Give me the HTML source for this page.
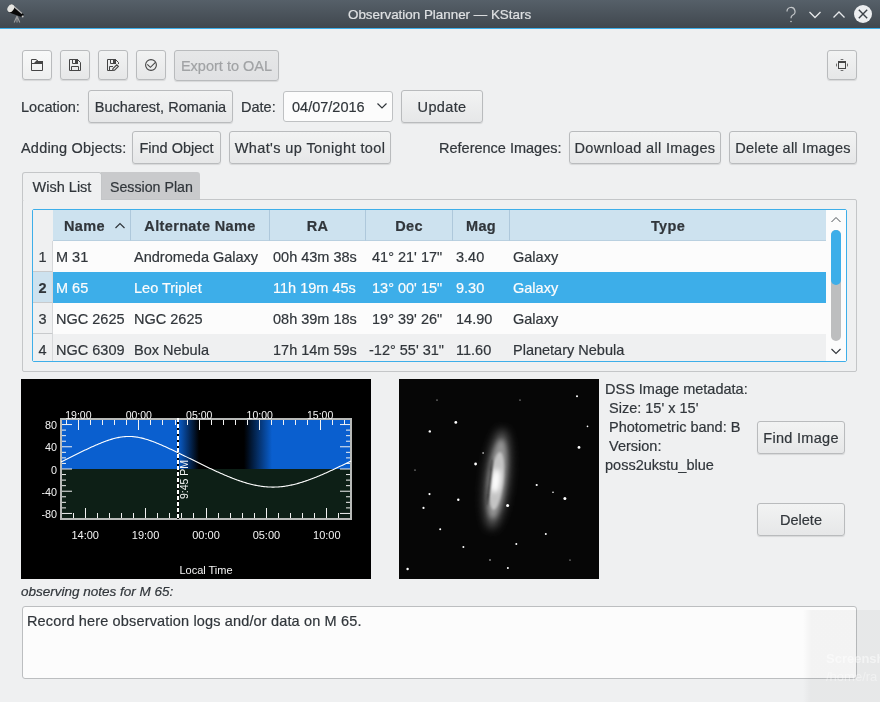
<!DOCTYPE html>
<html><head><meta charset="utf-8">
<style>
*{box-sizing:border-box;margin:0;padding:0}
html,body{width:880px;height:702px;overflow:hidden;background:#eff0f1;will-change:transform;-webkit-text-stroke:0.2px currentColor;font-family:"Liberation Sans",sans-serif;color:#31363b;font-size:14.5px}
.a{position:absolute}
#title{left:0;top:0;width:880px;height:28px;background:linear-gradient(#566069,#40474e)}
#tline{left:0;top:28px;width:880px;height:1px;background:#3daee9}
#ttext{left:348px;top:7px;color:#dfe1e3;font-size:13.4px;white-space:nowrap}
.btn{position:absolute;border:1px solid #b9bbbd;border-radius:3px;background:linear-gradient(#f2f3f3,#e6e7e8);box-shadow:0 1px 1px rgba(0,0,0,.10);text-align:center;white-space:nowrap;line-height:32px}
.lbl{position:absolute;white-space:nowrap;line-height:17px}
.ib svg{position:absolute;left:8px;top:8px}
.hd{position:absolute;top:210px;height:31px;background:#cde2ef;border-right:1px solid #aec8db;border-bottom:1px solid #b9d0e0;font-weight:bold;text-align:center;line-height:32px;font-size:14.5px;letter-spacing:0.35px}
.rn{position:absolute;left:33px;width:20px;background:#eff0f1;border-right:1px solid #d6d8da;border-bottom:1px solid #c8cacc;text-align:center;line-height:33px}
.row{position:absolute;left:53px;width:773px;height:31px}
.c{position:absolute;top:1px;line-height:31px;white-space:nowrap}
</style></head><body>
<div id="title" class="a"></div>
<div id="tline" class="a"></div>
<div id="ttext" class="a">Observation Planner — KStars</div>
<!-- telescope icon -->
<svg class="a" style="left:0;top:0" width="30" height="28" viewBox="0 0 30 28">
<path d="M17 16 L14.2 22.5 M17 16 L17 22.5 M17 16 L19.8 22.5" stroke="#9a9c9e" stroke-width="1.1" fill="none"/>
<path d="M10.5 4 L23.8 14.6 L22.3 17.2 L8.6 12.3 Z" fill="#080808"/>
<path d="M12.5 5.2 L22 13.5" stroke="#b8b8b8" stroke-width="1.2" fill="none"/>
<ellipse cx="10.8" cy="8.3" rx="3" ry="4.1" transform="rotate(35 10.8 8.3)" fill="#e6e6e2"/>
<circle cx="22.6" cy="16.4" r="1" fill="#ccc"/>
</svg>
<!-- window buttons -->
<svg class="a" style="left:780px;top:4px" width="100" height="22" viewBox="0 0 100 22">
<path d="M7 7.5 a4 4 0 1 1 5.5 3.7 c-1.3 .6 -1.5 1.3 -1.5 3" stroke="#c4c7ca" stroke-width="1.2" fill="none"/>
<circle cx="11" cy="17.5" r=".8" fill="#c4c7ca"/>
<path d="M29.5 8 L35 13.5 L40.5 8" stroke="#e6e8ea" stroke-width="1.3" fill="none"/>
<path d="M53.5 13.5 L59 8 L64.5 13.5" stroke="#e6e8ea" stroke-width="1.3" fill="none"/>
<circle cx="83" cy="10" r="9" fill="#eceef0"/>
<path d="M78.8 5.8 L87.2 14.2 M87.2 5.8 L78.8 14.2" stroke="#3c4248" stroke-width="1.4"/>
</svg>

<!-- toolbar -->
<div class="btn ib" style="left:22px;top:50px;width:30px;height:30px;background:linear-gradient(#f8f9f9,#eeefef)">
<svg width="12" height="12" viewBox="0 0 12 12" style="left:8px;top:8px"><path d="M0.5 11.5 V0.5 H5.3 L7.3 2.5 H11.5 V11.5 Z M0.5 4.5 H11.5" stroke="#454545" stroke-width="1" fill="none"/><path d="M5 0 L7 2 H12 V5 H0 V4 H3 L6 1 Z" fill="#454545"/></svg></div>
<div class="btn ib" style="left:60px;top:50px;width:30px;height:30px">
<svg width="12" height="12" viewBox="0 0 12 12" style="left:8px;top:8px"><path d="M0.5 0.5 H8.5 L11.5 3.5 V11.5 H0.5 Z M3.5 0.5 V4.5 H6 M2.5 11.5 V7.5 H9.5 V11.5" stroke="#454545" stroke-width="1" fill="none"/><rect x="6" y="0" width="3" height="5" fill="#454545"/></svg></div>
<div class="btn ib" style="left:98px;top:50px;width:30px;height:30px">
<svg width="12" height="12" viewBox="0 0 12 12" style="left:8px;top:8px"><path d="M5 11.5 H0.5 V0.5 H8.5 L11.5 3.5 V5 M3.5 0.5 V4.5 H6 M2.5 11.5 V7.5 H6" stroke="#454545" stroke-width="1" fill="none"/><rect x="6" y="0" width="3" height="5" fill="#454545"/><path d="M5.6 11.4 L6 9.6 L9.8 5.8 L11.4 7.4 L7.6 11.2 Z" stroke="#454545" stroke-width="1.1" fill="none"/></svg></div>
<div class="btn ib" style="left:136px;top:50px;width:30px;height:30px">
<svg width="12" height="12" viewBox="0 0 12 12" style="left:8px;top:8px"><circle cx="6" cy="6" r="5.4" stroke="#454545" stroke-width="1.1" fill="none"/><path d="M2.3 5.3 L5.4 8.3 L10.4 3.3" stroke="#454545" stroke-width="1.1" fill="none"/></svg></div>
<div class="btn" style="left:174px;top:50px;width:105px;height:31px;line-height:31px;color:#a1a3a5;background:linear-gradient(#e6e7e8,#e0e1e3)">Export to OAL</div>
<div class="btn ib" style="left:827px;top:50px;width:30px;height:30px">
<svg width="12" height="12" viewBox="0 0 12 12" style="left:8px;top:8px"><rect x="2.5" y="2.5" width="7" height="7" stroke="#454545" stroke-width="1" fill="none"/><rect x="2" y="2" width="8" height="2" fill="#454545"/><path d="M4 0.5 Q6 -0.3 8 0.5 Q6 1.4 4 0.5 Z M4 11.5 Q6 10.6 8 11.5 Q6 12.3 4 11.5 Z M0.5 4 Q1.4 6 0.5 8 Q-0.3 6 0.5 4 Z M11.5 4 Q12.3 6 11.5 8 Q10.6 6 11.5 4 Z" fill="#454545"/></svg></div>

<div class="lbl" style="left:21px;top:99px">Location:</div>
<div class="btn" style="left:88px;top:90px;width:145px;height:33px">Bucharest, Romania</div>
<div class="lbl" style="left:241px;top:99px">Date:</div>
<div class="a" style="left:283px;top:91px;width:110px;height:31px;border:1px solid #bfc1c3;border-radius:3px;background:#fcfcfc;line-height:31px;padding-left:8px">04/07/2016</div>
<svg class="a" style="left:376px;top:102px" width="12" height="8" viewBox="0 0 12 8"><path d="M1.5 1.5 L6 6 L10.5 1.5" stroke="#31363b" stroke-width="1.2" fill="none"/></svg>
<div class="btn" style="left:401px;top:90px;width:82px;height:33px;letter-spacing:0.35px">Update</div>

<div class="lbl" style="left:21px;top:140px;letter-spacing:0.2px">Adding Objects:</div>
<div class="btn" style="left:132px;top:131px;width:89px;height:33px">Find Object</div>
<div class="btn" style="left:229px;top:131px;width:162px;height:33px;letter-spacing:0.4px">What's up Tonight tool</div>
<div class="lbl" style="left:439px;top:140px">Reference Images:</div>
<div class="btn" style="left:569px;top:131px;width:152px;height:33px;letter-spacing:0.33px">Download all Images</div>
<div class="btn" style="left:729px;top:131px;width:128px;height:33px;letter-spacing:0.2px">Delete all Images</div>

<!-- tabs -->
<div class="a" style="left:22px;top:199px;width:835px;height:173px;border:1px solid #c4c6c8;border-radius:2px"></div>
<div class="a" style="left:101px;top:172px;width:99px;height:27px;background:#c9cacc;border-radius:0 3px 0 0;line-height:30px;padding-left:9px;font-size:14.2px">Session Plan</div>
<div class="a" style="left:22px;top:172px;width:80px;height:28px;background:#eff0f1;border:1px solid #c4c6c8;border-bottom:none;border-radius:3px 3px 0 0;text-align:center;line-height:29px">Wish List</div>

<!-- table -->
<div class="a" style="left:32px;top:209px;width:815px;height:153px;border:1px solid #3daee9;border-radius:2px;background:#fcfcfc;overflow:hidden"></div>
<div class="a" style="left:33px;top:210px;width:20px;height:31px;background:#eff0f1"></div>
<div class="hd" style="left:53px;width:78px;text-align:left;padding-left:11px">Name</div>
<svg class="a" style="left:114px;top:222px" width="12" height="8" viewBox="0 0 12 8"><path d="M1.5 6 L6 1.5 L10.5 6" stroke="#31363b" stroke-width="1.2" fill="none"/></svg>
<div class="hd" style="left:131px;width:139px">Alternate Name</div>
<div class="hd" style="left:270px;width:96px">RA</div>
<div class="hd" style="left:366px;width:87px">Dec</div>
<div class="hd" style="left:453px;width:57px">Mag</div>
<div class="hd" style="left:510px;width:316px;border-right:none">Type</div>

<div class="row" style="top:241px;background:#fcfcfc"><div class="c" style="left:3px">M 31</div><div class="c" style="left:81px">Andromeda Galaxy</div><div class="c" style="left:220px">00h 43m 38s</div><div class="c" style="left:319px">41° 21' 17"</div><div class="c" style="left:403px">3.40</div><div class="c" style="left:460px">Galaxy</div></div>
<div class="row" style="top:272px;background:#3daee9;color:#fcfcfc"><div class="c" style="left:3px">M 65</div><div class="c" style="left:81px">Leo Triplet</div><div class="c" style="left:220px">11h 19m 45s</div><div class="c" style="left:319px">13° 00' 15"</div><div class="c" style="left:403px">9.30</div><div class="c" style="left:460px">Galaxy</div></div>
<div class="row" style="top:303px;background:#fcfcfc"><div class="c" style="left:3px">NGC 2625</div><div class="c" style="left:81px">NGC 2625</div><div class="c" style="left:220px">08h 39m 18s</div><div class="c" style="left:319px">19° 39' 26"</div><div class="c" style="left:403px">14.90</div><div class="c" style="left:460px">Galaxy</div></div>
<div class="row" style="top:334px;height:27px;background:#eff0f1;overflow:hidden"><div class="c" style="left:3px">NGC 6309</div><div class="c" style="left:81px">Box Nebula</div><div class="c" style="left:220px">17h 14m 59s</div><div class="c" style="left:316px">-12° 55' 31"</div><div class="c" style="left:403px">11.60</div><div class="c" style="left:460px">Planetary Nebula</div></div>
<div class="rn" style="top:241px;height:31px">1</div>
<div class="rn" style="top:272px;height:31px;background:#cde2ef;font-weight:bold">2</div>
<div class="rn" style="top:303px;height:31px">3</div>
<div class="rn" style="top:334px;height:27px;border-bottom:none;overflow:hidden">4</div>
<!-- scrollbar -->
<svg class="a" style="left:826px;top:210px" width="20" height="151" viewBox="0 0 20 151">
<rect width="20" height="151" fill="#fcfcfc"/>
<path d="M5.5 12 L10 7.5 L14.5 12" stroke="#4d5257" stroke-width="1" fill="none"/>
<path d="M5.5 139 L10 143.5 L14.5 139" stroke="#31363b" stroke-width="1.1" fill="none"/>
<rect x="5" y="20" width="10" height="111" rx="5" fill="#bdbebf"/>
<rect x="5" y="20" width="10" height="55" rx="5" fill="#3daee9"/>
</svg>

<!-- plot -->
<svg class="a" style="left:21px;top:379px" width="350" height="200" viewBox="0 0 350 200">
<defs><linearGradient id="gl" x1="0" x2="1"><stop offset="0.000" stop-color="rgb(10,95,207)"/><stop offset="0.125" stop-color="rgb(8,83,181)"/><stop offset="0.250" stop-color="rgb(7,71,155)"/><stop offset="0.375" stop-color="rgb(6,59,129)"/><stop offset="0.500" stop-color="rgb(5,47,103)"/><stop offset="0.625" stop-color="rgb(3,35,77)"/><stop offset="0.750" stop-color="rgb(2,23,51)"/><stop offset="0.875" stop-color="rgb(1,11,25)"/><stop offset="1.000" stop-color="rgb(0,0,0)"/></linearGradient><linearGradient id="gr" x1="0" x2="1"><stop offset="0.000" stop-color="rgb(0,0,0)"/><stop offset="0.125" stop-color="rgb(1,11,25)"/><stop offset="0.250" stop-color="rgb(2,23,51)"/><stop offset="0.375" stop-color="rgb(3,35,77)"/><stop offset="0.500" stop-color="rgb(5,47,103)"/><stop offset="0.625" stop-color="rgb(6,59,129)"/><stop offset="0.750" stop-color="rgb(7,71,155)"/><stop offset="0.875" stop-color="rgb(8,83,181)"/><stop offset="1.000" stop-color="rgb(10,95,207)"/></linearGradient></defs>
<rect x="0" y="0" width="350" height="200" fill="#000"/>
<rect x="40" y="40" width="290" height="50" fill="#0a5fcf"/>
<rect x="157" y="40" width="21" height="50" fill="url(#gl)"/>
<rect x="178" y="40" width="45" height="50" fill="#000"/>
<rect x="223" y="40" width="28" height="50" fill="url(#gr)"/>
<rect x="40" y="90" width="290" height="50" fill="#0d1f16"/>
<line x1="40" y1="134.44" x2="51" y2="134.44" stroke="#f2f2f2" stroke-width="1"/>
<line x1="330" y1="134.44" x2="319" y2="134.44" stroke="#f2f2f2" stroke-width="1"/>
<line x1="40" y1="128.89" x2="45" y2="128.89" stroke="#f2f2f2" stroke-width="1"/>
<line x1="330" y1="128.89" x2="325" y2="128.89" stroke="#f2f2f2" stroke-width="1"/>
<line x1="40" y1="123.33" x2="45" y2="123.33" stroke="#f2f2f2" stroke-width="1"/>
<line x1="330" y1="123.33" x2="325" y2="123.33" stroke="#f2f2f2" stroke-width="1"/>
<line x1="40" y1="117.78" x2="45" y2="117.78" stroke="#f2f2f2" stroke-width="1"/>
<line x1="330" y1="117.78" x2="325" y2="117.78" stroke="#f2f2f2" stroke-width="1"/>
<line x1="40" y1="112.22" x2="51" y2="112.22" stroke="#f2f2f2" stroke-width="1"/>
<line x1="330" y1="112.22" x2="319" y2="112.22" stroke="#f2f2f2" stroke-width="1"/>
<line x1="40" y1="106.67" x2="45" y2="106.67" stroke="#f2f2f2" stroke-width="1"/>
<line x1="330" y1="106.67" x2="325" y2="106.67" stroke="#f2f2f2" stroke-width="1"/>
<line x1="40" y1="101.11" x2="45" y2="101.11" stroke="#f2f2f2" stroke-width="1"/>
<line x1="330" y1="101.11" x2="325" y2="101.11" stroke="#f2f2f2" stroke-width="1"/>
<line x1="40" y1="95.56" x2="45" y2="95.56" stroke="#f2f2f2" stroke-width="1"/>
<line x1="330" y1="95.56" x2="325" y2="95.56" stroke="#f2f2f2" stroke-width="1"/>
<line x1="40" y1="90.00" x2="51" y2="90.00" stroke="#f2f2f2" stroke-width="1"/>
<line x1="330" y1="90.00" x2="319" y2="90.00" stroke="#f2f2f2" stroke-width="1"/>
<line x1="40" y1="84.44" x2="45" y2="84.44" stroke="#f2f2f2" stroke-width="1"/>
<line x1="330" y1="84.44" x2="325" y2="84.44" stroke="#f2f2f2" stroke-width="1"/>
<line x1="40" y1="78.89" x2="45" y2="78.89" stroke="#f2f2f2" stroke-width="1"/>
<line x1="330" y1="78.89" x2="325" y2="78.89" stroke="#f2f2f2" stroke-width="1"/>
<line x1="40" y1="73.33" x2="45" y2="73.33" stroke="#f2f2f2" stroke-width="1"/>
<line x1="330" y1="73.33" x2="325" y2="73.33" stroke="#f2f2f2" stroke-width="1"/>
<line x1="40" y1="67.78" x2="51" y2="67.78" stroke="#f2f2f2" stroke-width="1"/>
<line x1="330" y1="67.78" x2="319" y2="67.78" stroke="#f2f2f2" stroke-width="1"/>
<line x1="40" y1="62.22" x2="45" y2="62.22" stroke="#f2f2f2" stroke-width="1"/>
<line x1="330" y1="62.22" x2="325" y2="62.22" stroke="#f2f2f2" stroke-width="1"/>
<line x1="40" y1="56.67" x2="45" y2="56.67" stroke="#f2f2f2" stroke-width="1"/>
<line x1="330" y1="56.67" x2="325" y2="56.67" stroke="#f2f2f2" stroke-width="1"/>
<line x1="40" y1="51.11" x2="45" y2="51.11" stroke="#f2f2f2" stroke-width="1"/>
<line x1="330" y1="51.11" x2="325" y2="51.11" stroke="#f2f2f2" stroke-width="1"/>
<line x1="40" y1="45.56" x2="51" y2="45.56" stroke="#f2f2f2" stroke-width="1"/>
<line x1="330" y1="45.56" x2="319" y2="45.56" stroke="#f2f2f2" stroke-width="1"/>
<line x1="52.5" y1="139" x2="52.5" y2="134" stroke="#f2f2f2" stroke-width="1"/>
<line x1="64.5" y1="139" x2="64.5" y2="129" stroke="#f2f2f2" stroke-width="1"/>
<line x1="76.5" y1="139" x2="76.5" y2="134" stroke="#f2f2f2" stroke-width="1"/>
<line x1="88.5" y1="139" x2="88.5" y2="134" stroke="#f2f2f2" stroke-width="1"/>
<line x1="100.5" y1="139" x2="100.5" y2="134" stroke="#f2f2f2" stroke-width="1"/>
<line x1="112.5" y1="139" x2="112.5" y2="134" stroke="#f2f2f2" stroke-width="1"/>
<line x1="124.5" y1="139" x2="124.5" y2="129" stroke="#f2f2f2" stroke-width="1"/>
<line x1="136.5" y1="139" x2="136.5" y2="134" stroke="#f2f2f2" stroke-width="1"/>
<line x1="148.5" y1="139" x2="148.5" y2="134" stroke="#f2f2f2" stroke-width="1"/>
<line x1="160.5" y1="139" x2="160.5" y2="134" stroke="#f2f2f2" stroke-width="1"/>
<line x1="172.5" y1="139" x2="172.5" y2="134" stroke="#f2f2f2" stroke-width="1"/>
<line x1="185.5" y1="139" x2="185.5" y2="129" stroke="#f2f2f2" stroke-width="1"/>
<line x1="197.5" y1="139" x2="197.5" y2="134" stroke="#f2f2f2" stroke-width="1"/>
<line x1="209.5" y1="139" x2="209.5" y2="134" stroke="#f2f2f2" stroke-width="1"/>
<line x1="221.5" y1="139" x2="221.5" y2="134" stroke="#f2f2f2" stroke-width="1"/>
<line x1="233.5" y1="139" x2="233.5" y2="134" stroke="#f2f2f2" stroke-width="1"/>
<line x1="245.5" y1="139" x2="245.5" y2="129" stroke="#f2f2f2" stroke-width="1"/>
<line x1="257.5" y1="139" x2="257.5" y2="134" stroke="#f2f2f2" stroke-width="1"/>
<line x1="269.5" y1="139" x2="269.5" y2="134" stroke="#f2f2f2" stroke-width="1"/>
<line x1="281.5" y1="139" x2="281.5" y2="134" stroke="#f2f2f2" stroke-width="1"/>
<line x1="293.5" y1="139" x2="293.5" y2="134" stroke="#f2f2f2" stroke-width="1"/>
<line x1="305.5" y1="139" x2="305.5" y2="129" stroke="#f2f2f2" stroke-width="1"/>
<line x1="317.5" y1="139" x2="317.5" y2="134" stroke="#f2f2f2" stroke-width="1"/>
<line x1="45.5" y1="41" x2="45.5" y2="46" stroke="#f2f2f2" stroke-width="1"/>
<line x1="57.5" y1="41" x2="57.5" y2="51" stroke="#f2f2f2" stroke-width="1"/>
<line x1="69.5" y1="41" x2="69.5" y2="46" stroke="#f2f2f2" stroke-width="1"/>
<line x1="81.5" y1="41" x2="81.5" y2="46" stroke="#f2f2f2" stroke-width="1"/>
<line x1="93.5" y1="41" x2="93.5" y2="46" stroke="#f2f2f2" stroke-width="1"/>
<line x1="105.5" y1="41" x2="105.5" y2="46" stroke="#f2f2f2" stroke-width="1"/>
<line x1="117.5" y1="41" x2="117.5" y2="51" stroke="#f2f2f2" stroke-width="1"/>
<line x1="129.5" y1="41" x2="129.5" y2="46" stroke="#f2f2f2" stroke-width="1"/>
<line x1="141.5" y1="41" x2="141.5" y2="46" stroke="#f2f2f2" stroke-width="1"/>
<line x1="154.5" y1="41" x2="154.5" y2="46" stroke="#f2f2f2" stroke-width="1"/>
<line x1="166.5" y1="41" x2="166.5" y2="46" stroke="#f2f2f2" stroke-width="1"/>
<line x1="178.5" y1="41" x2="178.5" y2="51" stroke="#f2f2f2" stroke-width="1"/>
<line x1="190.5" y1="41" x2="190.5" y2="46" stroke="#f2f2f2" stroke-width="1"/>
<line x1="202.5" y1="41" x2="202.5" y2="46" stroke="#f2f2f2" stroke-width="1"/>
<line x1="214.5" y1="41" x2="214.5" y2="46" stroke="#f2f2f2" stroke-width="1"/>
<line x1="226.5" y1="41" x2="226.5" y2="46" stroke="#f2f2f2" stroke-width="1"/>
<line x1="238.5" y1="41" x2="238.5" y2="51" stroke="#f2f2f2" stroke-width="1"/>
<line x1="250.5" y1="41" x2="250.5" y2="46" stroke="#f2f2f2" stroke-width="1"/>
<line x1="262.5" y1="41" x2="262.5" y2="46" stroke="#f2f2f2" stroke-width="1"/>
<line x1="274.5" y1="41" x2="274.5" y2="46" stroke="#f2f2f2" stroke-width="1"/>
<line x1="286.5" y1="41" x2="286.5" y2="46" stroke="#f2f2f2" stroke-width="1"/>
<line x1="299.5" y1="41" x2="299.5" y2="51" stroke="#f2f2f2" stroke-width="1"/>
<line x1="311.5" y1="41" x2="311.5" y2="46" stroke="#f2f2f2" stroke-width="1"/>
<line x1="323.5" y1="41" x2="323.5" y2="46" stroke="#f2f2f2" stroke-width="1"/>
<rect x="40" y="40" width="290" height="100" fill="none" stroke="#b8bab8" stroke-width="2"/>
<line x1="157" y1="39" x2="157" y2="140" stroke="#000" stroke-width="2"/>
<line x1="157" y1="39" x2="157" y2="140" stroke="#fff" stroke-width="2" stroke-dasharray="4 2"/>
<polyline points="40.0,82.88 41.0,82.39 42.0,81.89 43.0,81.40 44.0,80.90 45.0,80.41 46.0,79.91 47.0,79.42 48.0,78.92 49.0,78.43 50.0,77.93 51.0,77.44 52.0,76.94 53.0,76.45 54.0,75.96 55.0,75.46 56.0,74.97 57.0,74.48 58.0,73.99 59.0,73.51 60.0,73.02 61.0,72.54 62.0,72.06 63.0,71.58 64.0,71.10 65.0,70.63 66.0,70.16 67.0,69.69 68.0,69.22 69.0,68.76 70.0,68.30 71.0,67.85 72.0,67.40 73.0,66.95 74.0,66.51 75.0,66.08 76.0,65.64 77.0,65.22 78.0,64.80 79.0,64.39 80.0,63.98 81.0,63.58 82.0,63.19 83.0,62.81 84.0,62.44 85.0,62.07 86.0,61.72 87.0,61.37 88.0,61.04 89.0,60.71 90.0,60.40 91.0,60.10 92.0,59.82 93.0,59.54 94.0,59.28 95.0,59.04 96.0,58.81 97.0,58.60 98.0,58.40 99.0,58.23 100.0,58.06 101.0,57.92 102.0,57.80 103.0,57.69 104.0,57.61 105.0,57.54 106.0,57.49 107.0,57.47 108.0,57.46 109.0,57.48 110.0,57.51 111.0,57.56 112.0,57.64 113.0,57.73 114.0,57.84 115.0,57.98 116.0,58.13 117.0,58.29 118.0,58.48 119.0,58.68 120.0,58.90 121.0,59.14 122.0,59.39 123.0,59.65 124.0,59.93 125.0,60.22 126.0,60.52 127.0,60.84 128.0,61.17 129.0,61.51 130.0,61.86 131.0,62.22 132.0,62.59 133.0,62.96 134.0,63.35 135.0,63.74 136.0,64.14 137.0,64.55 138.0,64.97 139.0,65.39 140.0,65.82 141.0,66.25 142.0,66.69 143.0,67.13 144.0,67.58 145.0,68.03 146.0,68.49 147.0,68.95 148.0,69.41 149.0,69.88 150.0,70.35 151.0,70.82 152.0,71.29 153.0,71.77 154.0,72.25 155.0,72.73 156.0,73.22 157.0,73.70 158.0,74.19 159.0,74.68 160.0,75.17 161.0,75.66 162.0,76.15 163.0,76.65 164.0,77.14 165.0,77.63 166.0,78.13 167.0,78.62 168.0,79.12 169.0,79.61 170.0,80.11 171.0,80.61 172.0,81.10 173.0,81.60 174.0,82.09 175.0,82.58 176.0,83.08 177.0,83.57 178.0,84.06 179.0,84.55 180.0,85.04 181.0,85.53 182.0,86.02 183.0,86.50 184.0,86.99 185.0,87.47 186.0,87.95 187.0,88.43 188.0,88.90 189.0,89.38 190.0,89.85 191.0,90.32 192.0,90.79 193.0,91.25 194.0,91.71 195.0,92.17 196.0,92.63 197.0,93.08 198.0,93.53 199.0,93.98 200.0,94.42 201.0,94.86 202.0,95.30 203.0,95.73 204.0,96.16 205.0,96.58 206.0,97.00 207.0,97.41 208.0,97.82 209.0,98.23 210.0,98.63 211.0,99.02 212.0,99.41 213.0,99.79 214.0,100.17 215.0,100.54 216.0,100.90 217.0,101.26 218.0,101.61 219.0,101.96 220.0,102.30 221.0,102.63 222.0,102.95 223.0,103.26 224.0,103.57 225.0,103.87 226.0,104.16 227.0,104.44 228.0,104.72 229.0,104.98 230.0,105.23 231.0,105.48 232.0,105.72 233.0,105.94 234.0,106.16 235.0,106.36 236.0,106.56 237.0,106.74 238.0,106.91 239.0,107.07 240.0,107.22 241.0,107.36 242.0,107.49 243.0,107.60 244.0,107.71 245.0,107.80 246.0,107.88 247.0,107.95 248.0,108.00 249.0,108.04 250.0,108.07 251.0,108.09 252.0,108.09 253.0,108.09 254.0,108.07 255.0,108.03 256.0,107.99 257.0,107.93 258.0,107.86 259.0,107.78 260.0,107.69 261.0,107.58 262.0,107.46 263.0,107.33 264.0,107.19 265.0,107.04 266.0,106.88 267.0,106.70 268.0,106.52 269.0,106.32 270.0,106.11 271.0,105.89 272.0,105.67 273.0,105.43 274.0,105.18 275.0,104.93 276.0,104.66 277.0,104.38 278.0,104.10 279.0,103.81 280.0,103.51 281.0,103.20 282.0,102.88 283.0,102.56 284.0,102.23 285.0,101.89 286.0,101.54 287.0,101.19 288.0,100.83 289.0,100.46 290.0,100.09 291.0,99.71 292.0,99.33 293.0,98.94 294.0,98.54 295.0,98.14 296.0,97.74 297.0,97.33 298.0,96.91 299.0,96.49 300.0,96.07 301.0,95.64 302.0,95.21 303.0,94.77 304.0,94.33 305.0,93.89 306.0,93.44 307.0,92.99 308.0,92.53 309.0,92.08 310.0,91.62 311.0,91.16 312.0,90.69 313.0,90.22 314.0,89.75 315.0,89.28 316.0,88.80 317.0,88.33 318.0,87.85 319.0,87.37 320.0,86.88 321.0,86.40 322.0,85.91 323.0,85.43 324.0,84.94 325.0,84.45 326.0,83.96 327.0,83.47 328.0,82.97 329.0,82.48 330.0,81.99" fill="none" stroke="#fff" stroke-width="1.1"/>
<text x="36" y="50.2" text-anchor="end" font-size="10.8" font-family="Liberation Sans" fill="#f4f4f4">80</text>
<text x="36" y="72.4" text-anchor="end" font-size="10.8" font-family="Liberation Sans" fill="#f4f4f4">40</text>
<text x="36" y="94.6" text-anchor="end" font-size="10.8" font-family="Liberation Sans" fill="#f4f4f4">0</text>
<text x="36" y="116.8" text-anchor="end" font-size="10.8" font-family="Liberation Sans" fill="#f4f4f4">-40</text>
<text x="36" y="139.0" text-anchor="end" font-size="10.8" font-family="Liberation Sans" fill="#f4f4f4">-80</text>
<text x="64.2" y="160" text-anchor="middle" font-size="11" font-family="Liberation Sans" fill="#f4f4f4">14:00</text>
<text x="124.6" y="160" text-anchor="middle" font-size="11" font-family="Liberation Sans" fill="#f4f4f4">19:00</text>
<text x="185.0" y="160" text-anchor="middle" font-size="11" font-family="Liberation Sans" fill="#f4f4f4">00:00</text>
<text x="245.4" y="160" text-anchor="middle" font-size="11" font-family="Liberation Sans" fill="#f4f4f4">05:00</text>
<text x="305.8" y="160" text-anchor="middle" font-size="11" font-family="Liberation Sans" fill="#f4f4f4">10:00</text>
<text x="57.4" y="40" text-anchor="middle" font-size="10.5" font-family="Liberation Sans" fill="#f4f4f4">19:00</text>
<text x="117.8" y="40" text-anchor="middle" font-size="10.5" font-family="Liberation Sans" fill="#f4f4f4">00:00</text>
<text x="178.2" y="40" text-anchor="middle" font-size="10.5" font-family="Liberation Sans" fill="#f4f4f4">05:00</text>
<text x="238.7" y="40" text-anchor="middle" font-size="10.5" font-family="Liberation Sans" fill="#f4f4f4">10:00</text>
<text x="299.1" y="40" text-anchor="middle" font-size="10.5" font-family="Liberation Sans" fill="#f4f4f4">15:00</text>
<text x="185" y="195" text-anchor="middle" font-size="11" font-family="Liberation Sans" fill="#f4f4f4">Local Time</text>
<text transform="translate(167,120) rotate(-90)" font-size="10.5" font-family="Liberation Sans" fill="#f4f4f4">9:45 PM</text>
</svg>

<!-- dss -->
<svg class="a" style="left:399px;top:379px" width="200" height="200" viewBox="0 0 200 200">
<defs>
<filter id="b4" x="-100%" y="-100%" width="300%" height="300%"><feGaussianBlur stdDeviation="5"/></filter>
<filter id="b2" x="-100%" y="-100%" width="300%" height="300%"><feGaussianBlur stdDeviation="2.5"/></filter>
<filter id="b1" x="-100%" y="-100%" width="300%" height="300%"><feGaussianBlur stdDeviation="1.2"/></filter>
<filter id="bs" x="-100%" y="-100%" width="300%" height="300%"><feGaussianBlur stdDeviation="0.5"/></filter>
<filter id="bl" filterUnits="userSpaceOnUse" x="-30" y="-60" width="60" height="120"><feGaussianBlur stdDeviation="0.7"/></filter>
</defs>
<rect width="200" height="200" fill="#060606"/>
<g transform="translate(98,100) rotate(6.5)">
<ellipse cx="0" cy="0" rx="12" ry="50" fill="#5a5a5a" filter="url(#b4)"/>
<ellipse cx="0" cy="0" rx="8.5" ry="40" fill="#959595" filter="url(#b2)"/>
<ellipse cx="0" cy="2" rx="6.5" ry="29" fill="#c4c4c4" filter="url(#b1)"/>
<ellipse cx="-1" cy="2" rx="4.5" ry="12" fill="#fff" filter="url(#b2)"/>
<ellipse cx="-7" cy="4" rx="1.1" ry="24" fill="#262626" filter="url(#b1)"/>
</g>
<circle cx="56.8" cy="43.4" r="1.4" fill="#fff" filter="url(#bs)"/>
<circle cx="30.8" cy="52.4" r="1.2" fill="#fff" filter="url(#bs)"/>
<circle cx="76.6" cy="85.0" r="1.4" fill="#fff" filter="url(#bs)"/>
<circle cx="180.0" cy="68.4" r="1.4" fill="#fff" filter="url(#bs)"/>
<circle cx="178.0" cy="17.3" r="1.0" fill="#fff" filter="url(#bs)"/>
<circle cx="137.7" cy="106.0" r="1.1" fill="#fff" filter="url(#bs)"/>
<circle cx="165.9" cy="119.5" r="1.5" fill="#fff" filter="url(#bs)"/>
<circle cx="108.6" cy="126.4" r="1.5" fill="#fff" filter="url(#bs)"/>
<circle cx="59.3" cy="120.8" r="1.2" fill="#fff" filter="url(#bs)"/>
<circle cx="30.5" cy="115.1" r="1.1" fill="#fff" filter="url(#bs)"/>
<circle cx="24.5" cy="128.9" r="1.1" fill="#fff" filter="url(#bs)"/>
<circle cx="41.2" cy="150.2" r="1.0" fill="#fff" filter="url(#bs)"/>
<circle cx="64.4" cy="168.1" r="1.0" fill="#fff" filter="url(#bs)"/>
<circle cx="117.3" cy="165.0" r="1.0" fill="#fff" filter="url(#bs)"/>
<circle cx="146.8" cy="155.0" r="1.0" fill="#fff" filter="url(#bs)"/>
<circle cx="8.6" cy="190.0" r="1.2" fill="#fff" filter="url(#bs)"/>
<circle cx="108.9" cy="189.1" r="1.0" fill="#fff" filter="url(#bs)"/>
<circle cx="154.0" cy="113.3" r="0.8" fill="#fff" filter="url(#bs)"/>
<circle cx="188.5" cy="47.4" r="0.8" fill="#fff" filter="url(#bs)"/>
<circle cx="84.1" cy="74.0" r="0.8" fill="#fff" filter="url(#bs)"/>
<circle cx="38.0" cy="21.0" r="0.6" fill="#fff" filter="url(#bs)"/>
<circle cx="121.0" cy="21.0" r="0.6" fill="#fff" filter="url(#bs)"/>
<circle cx="171.0" cy="181.0" r="0.6" fill="#fff" filter="url(#bs)"/>
<circle cx="91.0" cy="181.0" r="0.7" fill="#fff" filter="url(#bs)"/>
<circle cx="16.0" cy="91.0" r="0.6" fill="#fff" filter="url(#bs)"/>
</svg>
<div class="lbl" style="left:605px;top:380px;line-height:19px">DSS Image metadata:<br>&nbsp;Size: 15' x 15'<br>&nbsp;Photometric band: B<br>&nbsp;Version:<br>poss2ukstu_blue</div>
<div class="btn" style="left:757px;top:421px;width:88px;height:33px;letter-spacing:0.3px">Find Image</div>
<div class="btn" style="left:757px;top:503px;width:88px;height:33px">Delete</div>

<div class="lbl" style="left:21px;top:583px;font-style:italic;font-size:13.5px">observing notes for M 65:</div>
<div class="a" style="left:22px;top:606px;width:835px;height:73px;border:1px solid #bcbec0;border-radius:3px;background:#fcfcfc;padding:4px 4px;line-height:20px;letter-spacing:0.15px">Record here observation logs and/or data on M 65.</div>
<div class="a" style="left:803px;top:610px;width:77px;height:92px;background:linear-gradient(90deg,rgba(0,0,0,0),rgba(0,0,0,0.035) 8px)"></div>
<div class="lbl" style="left:826px;top:650px;color:rgba(255,255,255,0.5);font-weight:bold;font-size:13px;-webkit-text-stroke:0">Screensh</div>
<div class="lbl" style="left:826px;top:668px;color:rgba(255,255,255,0.4);font-size:13px;-webkit-text-stroke:0">/home/ra</div>
</body></html>
